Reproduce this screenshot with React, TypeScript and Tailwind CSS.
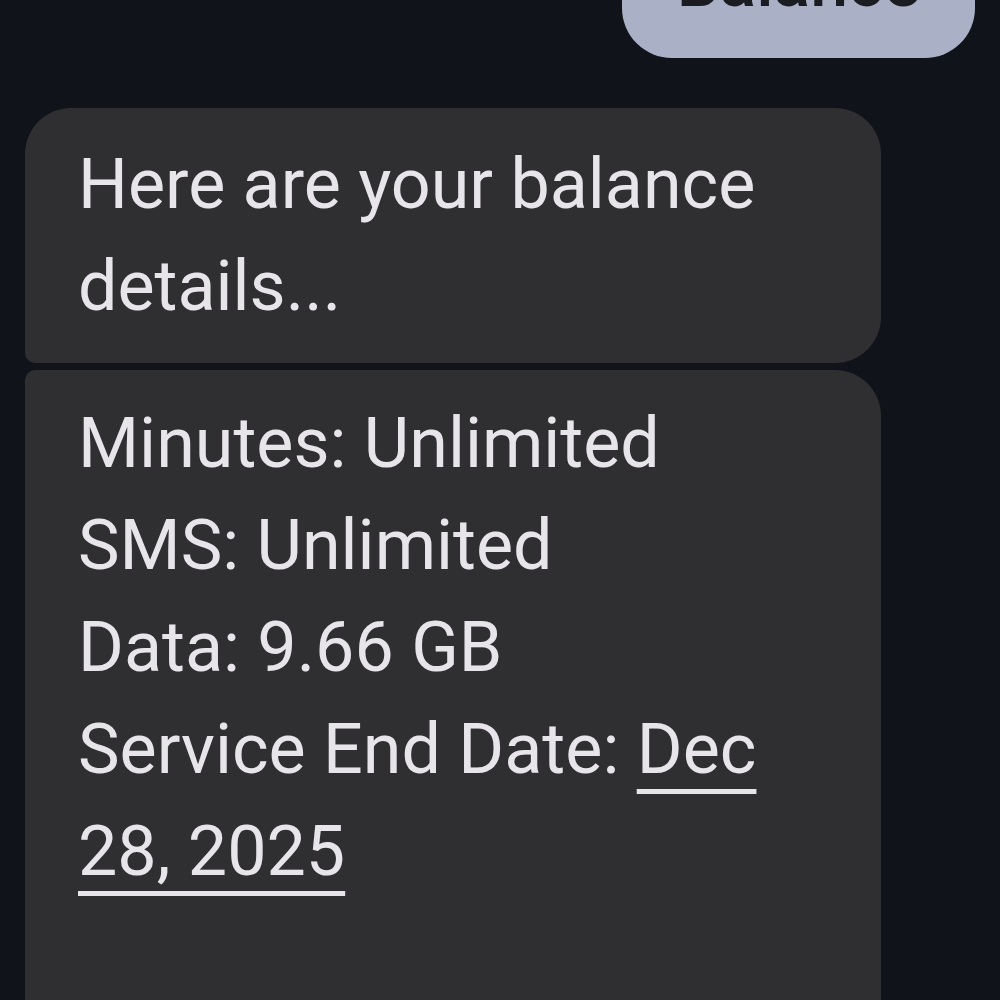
export default function App() {
  return (
    <div className="w-[1000px] h-[1000px] overflow-hidden bg-[#10131a] font-['Roboto',sans-serif]">
      <div className="flex flex-col px-[25px]">
        <div className="self-end -mt-[88px] bg-[#aab0c6] text-[#1b1c21] text-[68px] leading-[102px] rounded-[50px] pl-[55px] pr-[55px] pt-[20px] pb-[24px] font-medium">
          Balance
        </div>
        <div className="mt-[50px] w-[856px] bg-[#2f2f31] text-[#e8e5ea] text-[70px] leading-[102px] rounded-[46px] rounded-bl-[10px] pl-[53px] pr-[60px] pt-[25px] pb-[26px]">
          Here are your balance details...
        </div>
        <div className="mt-[7px] w-[856px] h-[700px] bg-[#2f2f31] text-[#e8e5ea] text-[70px] leading-[102px] rounded-[46px] rounded-tl-[10px] pl-[53px] pr-[60px] pt-[22px]">
          <div>Minutes: Unlimited</div>
          <div>SMS: Unlimited</div>
          <div>Data: 9.66 GB</div>
          <div>
            Service End Date:{" "}
            <span className="underline decoration-[5px] underline-offset-[16px]">
              Dec 28, 2025
            </span>
          </div>
        </div>
      </div>
    </div>
  );
}
